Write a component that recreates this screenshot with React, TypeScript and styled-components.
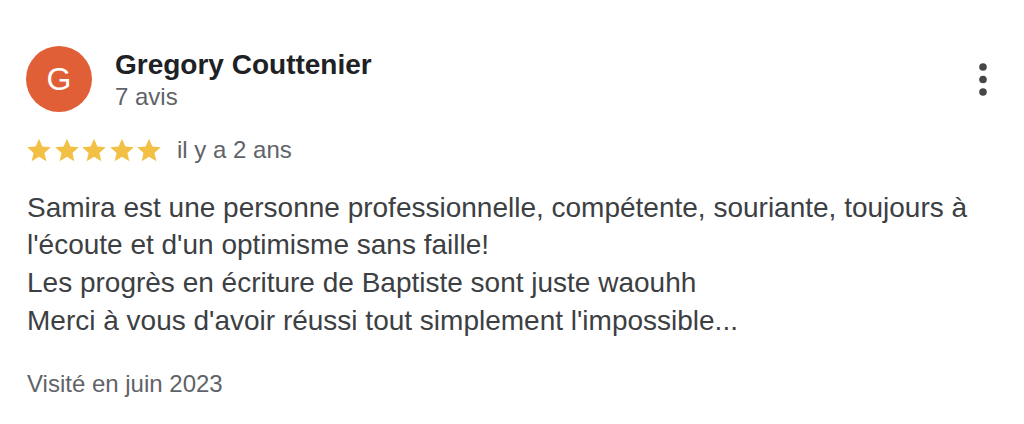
import React from "react";
import styled, { createGlobalStyle } from "styled-components";

const Global = createGlobalStyle`
  html, body { margin: 0; padding: 0; background: #ffffff; }
  body { font-family: "Liberation Sans", Arial, Helvetica, sans-serif; }
`;

const Card = styled.article`
  width: 1024px;
  height: 424px;
  box-sizing: border-box;
  padding: 46px 37px 0 26px;
  display: flex;
  flex-direction: column;
`;

const Header = styled.header`
  display: flex;
  align-items: flex-start;
`;

const Avatar = styled.div`
  width: 66px;
  height: 66px;
  border-radius: 50%;
  background: #e15f37;
  color: #ffffff;
  display: flex;
  align-items: center;
  justify-content: center;
  font-size: 32px;
  line-height: 1;
  flex-shrink: 0;
`;

const Who = styled.div`
  display: flex;
  flex-direction: column;
  padding-top: 2px;
  margin-left: 23px;
  flex: 1;
`;

const Name = styled.div`
  font-size: 28px;
  line-height: 34px;
  font-weight: 700;
  color: #202124;
`;

const Count = styled.div`
  font-size: 24px;
  line-height: 30px;
  color: #5f6368;
`;

const MoreButton = styled.button`
  margin-top: 17px;
  padding: 0;
  border: 0;
  background: none;
  width: 8px;
  height: 34px;
  display: flex;
  cursor: pointer;
`;

const RatingRow = styled.div`
  margin-top: 23px;
  display: flex;
  align-items: center;
  height: 30px;
`;

const Stars = styled.div`
  display: flex;
  gap: 1.5px;
  margin-right: 15px;
`;

const Ago = styled.span`
  font-size: 24px;
  line-height: 30px;
  color: #5f6368;
`;

const Body = styled.p`
  margin: 23.5px 0 0 1px;
  font-size: 28px;
  line-height: 37.8px;
  color: #3c4043;
  white-space: pre-line;
`;

const Visited = styled.div`
  margin-top: 29px;
  margin-left: 1px;
  font-size: 24px;
  line-height: 30px;
  color: #5f6368;
`;

const Star = () => (
  <svg width="26" height="26" viewBox="0 0 24 24" aria-hidden="true">
    <path
      fill="#f2c044"
      d="M12 1.6l3.1 7.2 7.8.7-5.9 5.2 1.8 7.7L12 18.3l-6.8 4.1 1.8-7.7-5.9-5.2 7.8-.7z"
    />
  </svg>
);

const Dots = () => (
  <svg width="8" height="34" viewBox="0 0 8 34" aria-hidden="true">
    <circle cx="4" cy="4" r="3.8" fill="#444746" />
    <circle cx="4" cy="16.5" r="3.8" fill="#444746" />
    <circle cx="4" cy="29" r="3.8" fill="#444746" />
  </svg>
);

const text =
  "Samira est une personne professionnelle, compétente, souriante, toujours à\nl'écoute et d'un optimisme sans faille!\nLes progrès en écriture de Baptiste sont juste waouhh\nMerci à vous d'avoir réussi tout simplement l'impossible...";

export default function App() {
  return (
    <>
      <Global />
      <Card>
        <Header>
          <Avatar>G</Avatar>
          <Who>
            <Name>Gregory Couttenier</Name>
            <Count>7 avis</Count>
          </Who>
          <MoreButton aria-label="Plus d'options">
            <Dots />
          </MoreButton>
        </Header>
        <RatingRow>
          <Stars>
            {[0, 1, 2, 3, 4].map((i) => (
              <Star key={i} />
            ))}
          </Stars>
          <Ago>il y a 2 ans</Ago>
        </RatingRow>
        <Body>{text}</Body>
        <Visited>Visité en juin 2023</Visited>
      </Card>
    </>
  );
}
